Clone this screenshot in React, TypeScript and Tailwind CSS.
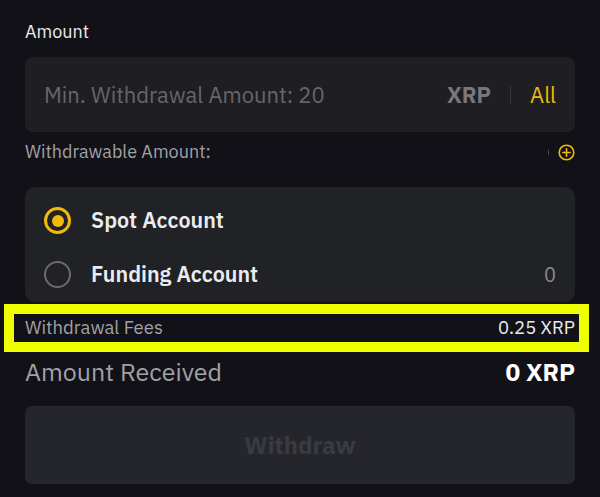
import React from 'react';

const font = { fontFamily: '"IBM Plex Sans", "Noto Sans", Inter, sans-serif' };

const PlusCircle = () => (
  <svg width="17" height="17" viewBox="0 0 17 17" fill="none">
    <circle cx="8.5" cy="8.5" r="7.3" stroke="#f0b90b" strokeWidth="1.6" />
    <path d="M8.5 4.8v7.4M4.8 8.5h7.4" stroke="#f0b90b" strokeWidth="1.6" strokeLinecap="round" />
  </svg>
);

const Radio = ({ checked }: { checked?: boolean }) =>
  checked ? (
    <span className="flex h-[27px] w-[27px] items-center justify-center rounded-full border-[3px] border-[#f0b90b]">
      <span className="h-[12px] w-[12px] rounded-full bg-[#f0b90b]" />
    </span>
  ) : (
    <span className="h-[27px] w-[27px] rounded-full border-2 border-[#6b6b70]" />
  );

export default function App() {
  return (
    <div className="h-[497px] w-[600px] overflow-hidden bg-[#121117] px-[25px] pt-[20px]" style={font}>
      <div className="text-[18px] leading-[24px] text-[#eaecef]">Amount</div>

      {/* amount input */}
      <div className="mt-[13px] flex h-[75px] items-center rounded-[7px] bg-[#1e1e23] pl-[19px] pr-[19px]">
        <span className="flex-1 text-[22px] text-[#66666b]">Min. Withdrawal Amount: 20</span>
        <span className="text-[22px] font-bold text-[#77777c]">XRP</span>
        <span className="ml-[19px] mr-[19px] h-[18px] w-px bg-[#36363b]" />
        <span className="text-[22px] text-[#f0b90b]">All</span>
      </div>

      <div className="mt-[7px] flex items-center">
        <span className="flex-1 text-[18px] leading-[26px] text-[#a1a1a6]">Withdrawable Amount:</span>
        <span className="mr-[9px] h-[5px] w-px bg-[#4a4a50]" />
        <PlusCircle />
      </div>

      {/* account selector */}
      <div className="mt-[22px] rounded-[10px] bg-[#212226] px-[19px] pt-[20px] pb-[14px]">
        <div className="flex h-[27px] items-center gap-[20px]">
          <Radio checked />
          <span className="text-[21.5px] font-semibold text-[#eaecef]">Spot Account</span>
        </div>
        <div className="mt-[27px] flex h-[27px] items-center gap-[20px]">
          <Radio />
          <span className="flex-1 text-[21.5px] font-semibold text-[#eaecef]">Funding Account</span>
          <span className="text-[20px] text-[#8a8a8f]">0</span>
        </div>
      </div>

      {/* fees row, highlighted */}
      <div className="ml-[-21px] mr-[-14px] mt-[2px] flex h-[48px] items-center border-[10px] border-[#eeff00] bg-[#121117] pl-[11px] pr-[4px]">
        <span className="flex-1 text-[18.5px] text-[#a1a1a6]">Withdrawal Fees</span>
        <span className="text-[18.5px] text-[#eaecef]">0.25 XRP</span>
      </div>

      <div className="mt-[4px] flex items-center">
        <span className="flex-1 text-[25px] leading-[32px] text-[#a1a1a6]">Amount Received</span>
        <span className="text-[24.5px] font-bold leading-[32px] text-white">0 XRP</span>
      </div>

      <button className="mt-[18px] flex h-[78px] w-full items-center justify-center rounded-[7px] bg-[#25262b] text-[24px] font-bold text-[#3a3b41]">
        Withdraw
      </button>
    </div>
  );
}
